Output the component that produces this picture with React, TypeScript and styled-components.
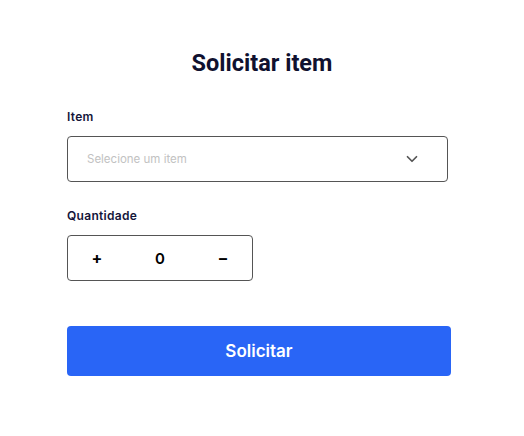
import React, { FC, useState } from "react";
import styled, { createGlobalStyle } from "styled-components";
import { ChevronDown } from "lucide-react";

const GlobalStyle = createGlobalStyle`
  body {
    margin: 0;
    background: #fff;
    font-family: Inter, "Noto Sans", sans-serif;
  }
`;

const App: FC = () => {
  const [qty, setQty] = useState(0);
  return (
    <>
      <GlobalStyle />
      <SPage>
        <STitle>Solicitar item</STitle>
        <SForm>
          <SField>
            <SLabel>Item</SLabel>
            <SSelect>
              <SPlaceholder>Selecione um item</SPlaceholder>
              <ChevronDown size={18} strokeWidth={2.3} color="#555" />
            </SSelect>
          </SField>
          <SField>
            <SLabel>Quantidade</SLabel>
            <SCounter>
              <SCounterBtn onClick={() => setQty(qty + 1)}>+</SCounterBtn>
              <SCounterValue>{qty}</SCounterValue>
              <SCounterBtn onClick={() => setQty(Math.max(0, qty - 1))}>–</SCounterBtn>
            </SCounter>
          </SField>
          <SSubmit>Solicitar</SSubmit>
        </SForm>
      </SPage>
    </>
  );
};

const SPage = styled.div`
  width: 524px;
  height: 436px;
  padding-top: 50px;
  box-sizing: border-box;
`;
const STitle = styled.h1`
  margin: 0;
  text-align: center;
  font-family: Roboto, "Liberation Sans", sans-serif;
  font-weight: 700;
  font-size: 23.5px;
  line-height: 27px;
  color: #10112f;
`;
const SForm = styled.div`
  margin: 32px 0 0 67px;
  width: 384px;
  display: flex;
  flex-direction: column;
`;
const SField = styled.div`
  display: flex;
  flex-direction: column;
  gap: 11px;
  margin-bottom: 26px;
`;
const SLabel = styled.label`
  font-size: 12px;
  font-weight: 600;
  letter-spacing: 0.3px;
  line-height: 16px;
  color: #14153a;
`;
const SSelect = styled.div`
  width: 381px;
  height: 46px;
  box-sizing: border-box;
  border: 1px solid #555;
  border-radius: 4px;
  display: flex;
  align-items: center;
  justify-content: space-between;
  padding: 0 26px 0 19px;
`;
const SPlaceholder = styled.span`
  font-size: 11.5px;
  color: #c2c2c2;
`;
const SCounter = styled.div`
  width: 186px;
  height: 46px;
  box-sizing: border-box;
  border: 1px solid #555;
  border-radius: 4px;
  display: grid;
  grid-template-columns: 58px 1fr 58px;
  align-items: center;
  justify-items: center;
`;
const SCounterBtn = styled.button`
  border: none;
  background: none;
  padding: 0;
  font-family: Inter, sans-serif;
  font-size: 16px;
  font-weight: 700;
  color: #000;
  cursor: pointer;
`;
const SCounterValue = styled.span`
  font-size: 15px;
  font-weight: 600;
  color: #000;
`;
const SSubmit = styled.button`
  margin-top: 19px;
  width: 384px;
  height: 50px;
  border: none;
  border-radius: 4px;
  background: #2965f6;
  color: #fff;
  font-family: Inter, sans-serif;
  font-size: 17px;
  font-weight: 600;
  cursor: pointer;
`;

export default App;
